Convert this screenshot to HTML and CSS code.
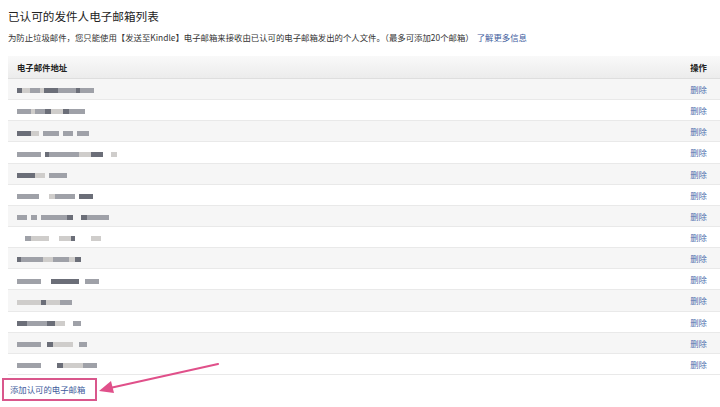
FILE: index.html
```html
<!DOCTYPE html>
<html lang="zh-CN">
<head>
  <meta charset="UTF-8">
  <title>已认可的发件人电子邮箱列表</title>
  <link rel="stylesheet" href="styles.css">
</head>
<body>
  <!-- Heading -->
  <h1 class="title">已认可的发件人电子邮箱列表</h1>
  <p class="intro">为防止垃圾邮件，您只能使用【发送至Kindle】电子邮箱来接收由已认可的电子邮箱发出的个人文件。（最多可添加20个邮箱）<a href="#" class="more-link">了解更多信息</a></p>

  <!-- Email table -->
  <table class="email-table">
    <thead>
      <tr>
        <th class="col-email">电子邮件地址</th>
        <th class="col-action">操作</th>
      </tr>
    </thead>
    <tbody>
      <tr><td><span class="blur"><i class="d" style="width:5px"></i><i class="l" style="width:8px"></i><i class="m" style="width:10px"></i><i class="l" style="width:4px"></i><i class="d" style="width:14px"></i><i class="m" style="width:18px"></i><i class="d" style="width:4px"></i><i class="m" style="width:14px"></i></span></td><td class="act"><a href="#">删除</a></td></tr>
      <tr><td><span class="blur"><i class="m" style="width:14px"></i><i class="l" style="width:4px"></i><i class="m" style="width:10px"></i><i class="d" style="width:6px"></i><i class="l" style="width:12px"></i><i class="d" style="width:6px"></i><i class="m" style="width:16px"></i></span></td><td class="act"><a href="#">删除</a></td></tr>
      <tr><td><span class="blur"><i class="d" style="width:14px"></i><i class="l" style="width:8px"></i><i class="n" style="width:4px"></i><i class="m" style="width:16px"></i><i class="n" style="width:4px"></i><i class="m" style="width:10px"></i><i class="n" style="width:4px"></i><i class="m" style="width:12px"></i></span></td><td class="act"><a href="#">删除</a></td></tr>
      <tr><td><span class="blur"><i class="m" style="width:24px"></i><i class="n" style="width:4px"></i><i class="d" style="width:4px"></i><i class="m" style="width:30px"></i><i class="l" style="width:12px"></i><i class="d" style="width:12px"></i><i class="n" style="width:8px"></i><i class="l" style="width:6px"></i></span></td><td class="act"><a href="#">删除</a></td></tr>
      <tr><td><span class="blur"><i class="d" style="width:18px"></i><i class="l" style="width:10px"></i><i class="n" style="width:4px"></i><i class="m" style="width:18px"></i></span></td><td class="act"><a href="#">删除</a></td></tr>
      <tr><td><span class="blur"><i class="m" style="width:22px"></i><i class="n" style="width:10px"></i><i class="l" style="width:6px"></i><i class="m" style="width:20px"></i><i class="n" style="width:4px"></i><i class="d" style="width:14px"></i></span></td><td class="act"><a href="#">删除</a></td></tr>
      <tr><td><span class="blur"><i class="m" style="width:10px"></i><i class="n" style="width:4px"></i><i class="m" style="width:6px"></i><i class="n" style="width:4px"></i><i class="m" style="width:26px"></i><i class="d" style="width:6px"></i><i class="n" style="width:8px"></i><i class="d" style="width:6px"></i><i class="m" style="width:22px"></i></span></td><td class="act"><a href="#">删除</a></td></tr>
      <tr><td><span class="blur pad"><i class="m" style="width:6px"></i><i class="l" style="width:18px"></i><i class="n" style="width:10px"></i><i class="l" style="width:12px"></i><i class="d" style="width:4px"></i><i class="n" style="width:16px"></i><i class="l" style="width:10px"></i></span></td><td class="act"><a href="#">删除</a></td></tr>
      <tr><td><span class="blur"><i class="d" style="width:4px"></i><i class="m" style="width:22px"></i><i class="l" style="width:10px"></i><i class="m" style="width:16px"></i><i class="l" style="width:6px"></i><i class="d" style="width:6px"></i></span></td><td class="act"><a href="#">删除</a></td></tr>
      <tr><td><span class="blur"><i class="m" style="width:24px"></i><i class="n" style="width:10px"></i><i class="d" style="width:28px"></i><i class="n" style="width:6px"></i><i class="m" style="width:14px"></i></span></td><td class="act"><a href="#">删除</a></td></tr>
      <tr><td><span class="blur"><i class="l" style="width:24px"></i><i class="d" style="width:5px"></i><i class="l" style="width:14px"></i><i class="m" style="width:12px"></i></span></td><td class="act"><a href="#">删除</a></td></tr>
      <tr><td><span class="blur"><i class="d" style="width:10px"></i><i class="m" style="width:20px"></i><i class="d" style="width:8px"></i><i class="l" style="width:10px"></i><i class="n" style="width:8px"></i><i class="m" style="width:8px"></i></span></td><td class="act"><a href="#">删除</a></td></tr>
      <tr><td><span class="blur"><i class="m" style="width:24px"></i><i class="n" style="width:6px"></i><i class="d" style="width:6px"></i><i class="l" style="width:20px"></i><i class="n" style="width:6px"></i><i class="m" style="width:8px"></i></span></td><td class="act"><a href="#">删除</a></td></tr>
      <tr><td><span class="blur"><i class="m" style="width:24px"></i><i class="n" style="width:16px"></i><i class="d" style="width:6px"></i><i class="l" style="width:20px"></i><i class="m" style="width:14px"></i></span></td><td class="act"><a href="#">删除</a></td></tr>
    </tbody>
  </table>

  <!-- Add link, highlighted -->
  <div class="add-row">
    <a href="#" class="add-link">添加认可的电子邮箱</a>
  </div>

  <!-- Pink arrow annotation -->
  <svg class="arrow" width="140" height="40" viewBox="0 0 140 40">
    <line x1="122" y1="4" x2="14" y2="28" stroke="#e0508a" stroke-width="2.2" stroke-linecap="round"/>
    <polygon points="3,31 15,21 18,33" fill="#e0508a"/>
  </svg>
</body>
</html>
```

FILE: styles.css
```css
/* Global */
body {
  margin: 0;
  padding: 8px 0 0 8px;
  font-family: "Noto Sans CJK SC", "Noto Sans", sans-serif;
  color: #333;
  background: #fff;
  position: relative;
  overflow: hidden;
}

a {
  color: #3d5b9c;
  text-decoration: none;
}

/* Heading */
.title {
  margin: 0;
  font-size: 11.6px;
  font-weight: normal;
  line-height: 16px;
  color: #222;
}

.intro {
  margin: 7px 0 0;
  font-size: 8.4px;
  line-height: 12px;
  color: #333;
}

.more-link {
  margin-left: 3px;
}

/* Table */
.email-table {
  width: 100%;
  margin-top: 13px;
  border-collapse: collapse;
  font-size: 8.4px;
}

.email-table th {
  height: 22px;
  padding: 0 9px;
  background: linear-gradient(#f9f9f9, #ececec);
  border-bottom: 1px solid #dedede;
  font-weight: bold;
  color: #222;
  text-align: left;
}

.email-table th.col-action {
  text-align: right;
  padding-right: 13px;
}

.email-table td {
  height: 20.15px;
  padding: 0 9px;
  border-bottom: 1px solid #e9e9e9;
  line-height: 12px;
}

.email-table tbody tr:nth-child(odd) td {
  background: #f6f6f6;
}

.email-table td.act {
  text-align: right;
  padding-right: 13px;
  width: 30px;
}

.email-table td.act a {
  color: #5070ae;
}

/* Pixelated addresses */
.blur {
  display: inline-flex;
  align-items: center;
  height: 6px;
  filter: blur(0.5px);
  vertical-align: middle;
}

.blur.pad {
  margin-left: 8px;
}

.blur i {
  display: block;
  height: 5px;
}

.blur .d { background: #6b6e78; }
.blur .m { background: #9fa1a8; }
.blur .l { background: #cfcdcb; }
.blur .n { background: transparent; }

/* Add link */
.add-row {
  display: flex;
  margin: 3px 0 0 -6px;
}

.add-link {
  padding: 3.5px 10px 3.5px 6px;
  border: 2px solid #d9578c;
  font-size: 8.4px;
  line-height: 12px;
}

/* Annotation arrow */
.arrow {
  position: absolute;
  left: 96px;
  top: 360px;
}
```
